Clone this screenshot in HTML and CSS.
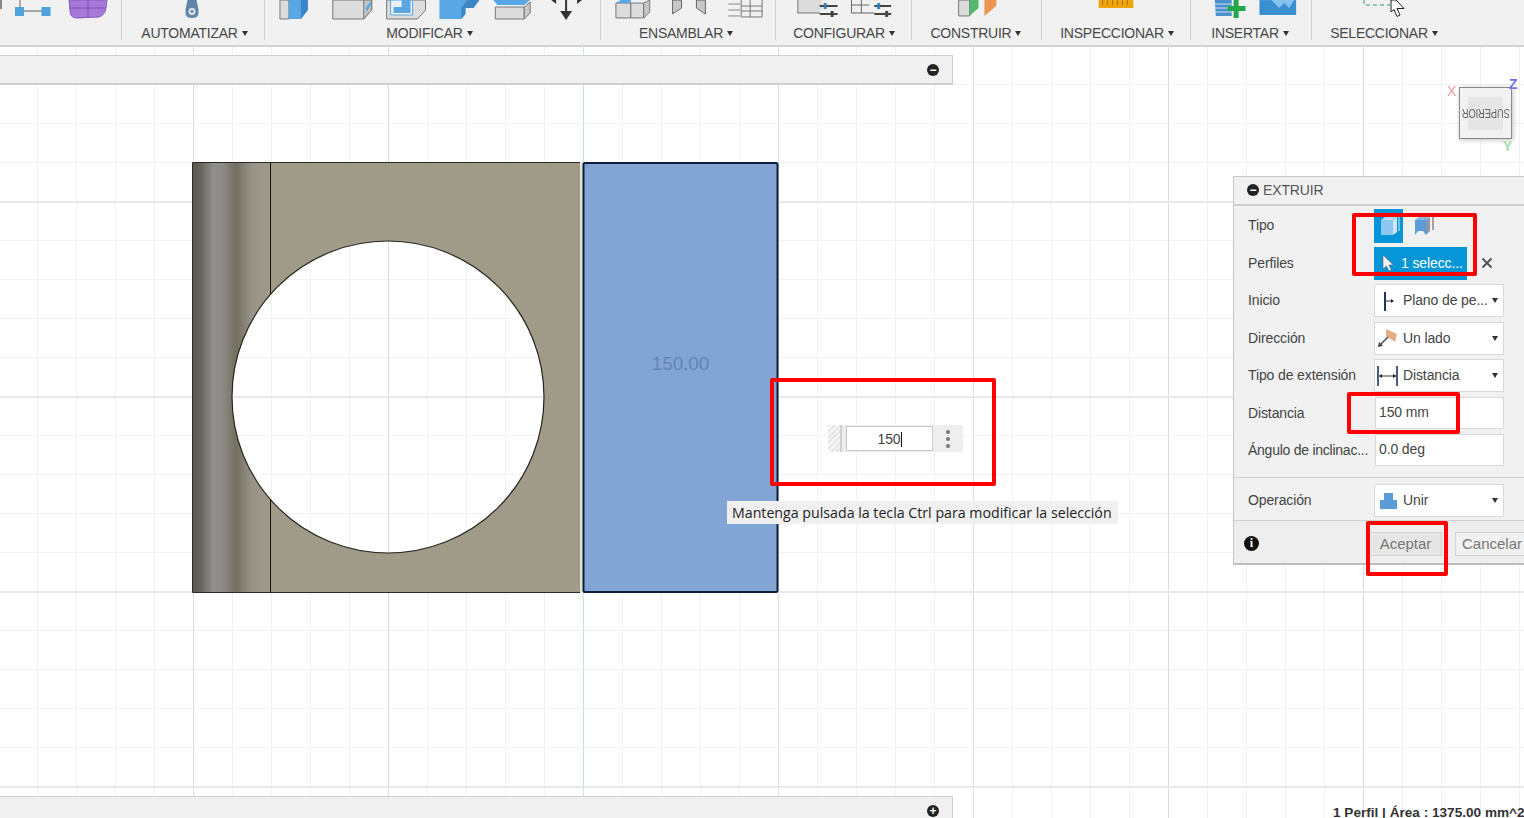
FILE: index.html
```html
<!DOCTYPE html>
<html lang="es">
<head>
<meta charset="utf-8">
<title>Extruir</title>
<link rel="stylesheet" href="styles.css">
</head>
<body>
<div class="app">
  <header class="toolbar">
    <section class="group g-crear">
      <svg class="tools" viewBox="0 0 121 20">
        <path d="M0 0H2V9H0Z" fill="#888"/>
        <path d="M20 0V8" stroke="#666" fill="none"/>
        <path d="M24 11H42" stroke="#777" stroke-width="1.2"/>
        <rect x="15" y="7" width="9" height="9" fill="#4ea3dd"/>
        <rect x="41.500" y="7" width="9" height="9" fill="#4ea3dd"/>
        <path d="M69 0H107L106 8Q105 15 99 17L77 18Q70 18 70 11Z" fill="#a678d8" stroke="#8a5cc0"/>
        <path d="M88 0V18M70 8H105" stroke="#7c4fb5" stroke-width="1" fill="none"/>
      </svg>
    </section>
    <section class="group g-auto">
      <svg class="tools" viewBox="122 0 143 20">
        <path d="M188 0H197L199 9V13Q199 18 192.500 18T186 13V9Z" fill="#5f86a8"/>
        <circle cx="192.500" cy="11.500" r="3.500" fill="#dfe6ec"/>
        <circle cx="192.500" cy="11.500" r="1.500" fill="#5f7f9a"/>
      </svg>
      <div class="label">AUTOMATIZAR<i class="caret"></i></div>
    </section>
    <section class="group g-mod">
      <svg class="tools" viewBox="265 0 336 20">
        <path d="M280 0V19H289V0Z" fill="#dcdcdc" stroke="#777"/>
        <path d="M289 0V19H301L308 10V0Z" fill="#58a6e4"/>
        <path d="M301 0V19L308 10V0Z" fill="#3c86c4"/>
        <path d="M333 0V19H364L372 10V0Z" fill="#dcdcdc" stroke="#777"/>
        <path d="M364 0V19L372 10V0Z" fill="#c4c4c4" stroke="#777"/>
        <path d="M366 8L371 1V5L367 12Z" fill="#58a6e4"/>
        <path d="M387 0V19H418L426 10V0Z" fill="#dcdcdc" stroke="#777"/>
        <path d="M391 15V0H413V15Z" fill="#eef2f5" stroke="#58a6e4"/>
        <path d="M394 13V7H402V0H411V13Z" fill="#58a6e4"/>
        <path d="M440 0V19H462L466 14V8H474L480 0Z" fill="#58a6e4"/>
        <path d="M462 19V8L468 0H480L474 8H466V14Z" fill="#3c86c4"/>
        <path d="M496 7H525V19H496Z" fill="#dcdcdc" stroke="#777"/>
        <path d="M525 7L531 2V13L525 19Z" fill="#c8c8c8" stroke="#777"/>
        <path d="M494 0H531L525 5H498Z" fill="#58a6e4"/>
        <path d="M567 0V17" stroke="#333" stroke-width="2"/>
        <path d="M561 11H573L567 20Z" fill="#333"/>
        <path d="M552 0L557 4V0ZM583 0L578 4V0Z" fill="#333"/>
      </svg>
      <div class="label">MODIFICAR<i class="caret"></i></div>
    </section>
    <section class="group g-ens">
      <svg class="tools" viewBox="601 0 175 20">
        <path d="M616 3H631V18H616Z" fill="#dcdcdc" stroke="#777"/>
        <path d="M631 3H644V18H631Z" fill="#dcdcdc" stroke="#777"/>
        <path d="M644 3L650 0V12L644 18Z" fill="#c8c8c8" stroke="#777"/>
        <path d="M616 3L621 0H631V3Z" fill="#58a6e4"/>
        <path d="M673 0V14L682 8V0Z" fill="#c8c8c8" stroke="#666"/>
        <path d="M706 0V14L697 8V0Z" fill="#c8c8c8" stroke="#666"/>
        <path d="M729 4H741M729 10H741M729 16H741" stroke="#888" fill="none"/>
        <path d="M742 0V17H763V0M742 6H763M742 11H763M751 0V17" stroke="#777" fill="none"/>
      </svg>
      <div class="label">ENSAMBLAR<i class="caret"></i></div>
    </section>
    <section class="group g-conf">
      <svg class="tools" viewBox="776 0 136 20">
        <path d="M798 0H822V10H820V13H798Z" fill="#dcdcdc"/>
        <path d="M798 0V13H820" fill="none" stroke="#777"/>
        <path d="M820 6H838M820 14H838" stroke="#444" stroke-width="2"/>
        <rect x="824" y="3" width="3" height="6" fill="#2f7fc1"/>
        <rect x="831" y="11" width="3" height="6" fill="#444"/>
        <path d="M852 0V13H875M852 5H870M862 0V13" stroke="#666" fill="none"/>
        <path d="M875 6H892M875 14H892" stroke="#444" stroke-width="2"/>
        <rect x="878" y="3" width="3" height="6" fill="#2f7fc1"/>
        <rect x="886" y="11" width="3" height="6" fill="#444"/>
      </svg>
      <div class="label">CONFIGURAR<i class="caret"></i></div>
    </section>
    <section class="group g-cons">
      <svg class="tools" viewBox="912 0 130 20">
        <path d="M959 0V16H970V0Z" fill="#dcdcdc" stroke="#777"/>
        <path d="M970 0V16L979 8V0Z" fill="#55b96d"/>
        <path d="M985 0V16L997 6V0Z" fill="#ee9650"/>
      </svg>
      <div class="label">CONSTRUIR<i class="caret"></i></div>
    </section>
    <section class="group g-insp">
      <svg class="tools" viewBox="1042 0 149 20">
        <rect x="1099" y="0" width="35" height="8" fill="#f1a30a"/>
        <path d="M1103 0V5M1108 0V5M1113 0V5M1118 0V5M1123 0V5M1128 0V5" stroke="#a8730a"/>
      </svg>
      <div class="label">INSPECCIONAR<i class="caret"></i></div>
    </section>
    <section class="group g-ins">
      <svg class="tools" viewBox="1191 0 121 20">
        <path d="M1215 0H1232V16H1216Z" fill="#4b8fce"/>
        <path d="M1215 4H1232M1215 8H1232M1215 12H1232" stroke="#cfe2f2"/>
        <path d="M1234 0H1239V6H1246V11H1239V18H1234V11H1228V6H1234Z" fill="#23a84a"/>
        <rect x="1260" y="0" width="37" height="15" fill="#3a8fd1"/>
        <path d="M1272 0L1280 8L1285 3L1290 8L1295 0Z" fill="#86c3ee"/>
      </svg>
      <div class="label">INSERTAR<i class="caret"></i></div>
    </section>
    <section class="group g-sel">
      <svg class="tools" viewBox="1312 0 146 20">
        <path d="M1364 0V5H1390" stroke="#2ca36a" stroke-dasharray="4 3" fill="none"/>
        <path d="M1391 0V12L1394 9.500L1397 16.500L1400 15L1397 8.500H1404L1396 0Z" fill="#fff" stroke="#222"/>
      </svg>
      <div class="label">SELECCIONAR<i class="caret"></i></div>
    </section>
  </header>

  <main class="viewport">
    <svg class="scene" viewBox="0 47 1524 771" aria-label="Vista">
      <defs>
        <pattern id="minor" width="39" height="39" patternUnits="userSpaceOnUse" x="37" y="45">
          <rect width="1" height="39" fill="#f2f2f2"/>
          <rect width="39" height="1" fill="#f2f2f2"/>
        </pattern>
        <pattern id="major" width="195" height="195" patternUnits="userSpaceOnUse" x="193" y="6">
          <rect width="1" height="195" fill="#dcdcdc"/>
          <rect width="195" height="2" fill="#e8e8e8"/>
        </pattern>
        <linearGradient id="fillet" x1="0" x2="1" y1="0" y2="0">
          <stop offset="0" stop-color="#5a554e"/>
          <stop offset="0.1" stop-color="#68635b"/>
          <stop offset="0.26" stop-color="#8f8f8c"/>
          <stop offset="0.38" stop-color="#8d8b85"/>
          <stop offset="0.56" stop-color="#736e60"/>
          <stop offset="0.76" stop-color="#979388"/>
          <stop offset="1" stop-color="#a09a88"/>
        </linearGradient>
        <clipPath id="hole">
          <path clip-rule="evenodd" d="M193 162H581V593H193ZM232 397a156 156 0 1 0 312 0a156 156 0 1 0 -312 0Z"/>
        </clipPath>
      </defs>
      <rect x="0" y="47" width="1524" height="771" fill="#fff"/>
      <rect x="0" y="47" width="1524" height="771" fill="url(#minor)"/>
      <rect x="0" y="47" width="1524" height="771" fill="url(#major)"/>
      <rect x="583" y="47" width="1" height="771" fill="#bfeec8"/>
      <g clip-path="url(#hole)">
        <rect class="body" x="270" y="162" width="310" height="431"/>
        <rect x="193" y="162" width="77" height="431" fill="url(#fillet)"/>
      </g>
      <rect x="580" y="162" width="3" height="431" fill="#e6e3d8"/>
      <path d="M580 162.500H192.500V592.500H580" fill="none" stroke="#2b2a26"/>
      <path d="M270.500 162.500V295M270.500 499V592.500" stroke="#111" fill="none"/>
      <circle cx="388" cy="397" r="156" fill="none" stroke="#26251f" stroke-width="1.200"/>
      <rect x="583.500" y="163" width="194" height="429" rx="1.500" fill="#82a5d6" stroke="#0e1e38" stroke-width="2"/>
      <text class="dim" x="680.500" y="370" text-anchor="middle">150.00</text>
    </svg>

    <div class="strip strip-top"><span class="round">−</span></div>
    <div class="strip strip-bottom"><span class="round">+</span></div>

    <div class="cube">
      <span class="axis axis-x">X</span>
      <span class="axis axis-z">Z</span>
      <span class="axis axis-y">Y</span>
      <div class="cube-face"><span class="cube-text">SUPERIOR</span></div>
    </div>

    <div class="float-input">
      <span class="grip"></span>
      <span class="float-field">150<i class="text-cursor"></i></span>
      <span class="kebab"><i></i><i></i><i></i></span>
    </div>

    <div class="tip">Mantenga pulsada la tecla Ctrl para modificar la selección</div>

    <aside class="dialog">
      <div class="dialog-head"><span class="round round-sm">−</span>EXTRUIR</div>
      <div class="dialog-body">
        <div class="row">
          <span class="row-label">Tipo</span>
          <div class="type-btns">
            <span class="type-btn active">
              <svg width="22" height="22" viewBox="0 0 22 22"><path d="M3 5H15V20H3Z" fill="#8ec8f2"/><path d="M15 5L19 2V17L15 20Z" fill="#cfe6f7"/><path d="M3 5L7 2H19L15 5Z" fill="#b9dcf5"/><path d="M21 2V16" stroke="#d8eefa"/></svg>
            </span>
            <span class="type-btn">
              <svg width="22" height="22" viewBox="0 0 22 22"><path d="M3 5H14V20L11 16H6L3 20Z" fill="#5c9bd8"/><path d="M14 5L18 2V16L14 20Z" fill="#8a99a8"/><path d="M3 5L7 2H18L14 5Z" fill="#86b8e6"/><path d="M21 1V15" stroke="#555"/></svg>
            </span>
          </div>
        </div>
        <div class="row">
          <span class="row-label">Perfiles</span>
          <div class="profile-line">
            <span class="profile-btn">
              <svg width="12" height="18" viewBox="0 0 12 18"><path d="M1 1V15L4.500 12L7 17L9.500 16L7 11H11.500Z" fill="#f2f2f2" stroke="#556" stroke-width=".6"/></svg>
              1 selecc...
            </span>
            <svg class="clear" width="12" height="12" viewBox="0 0 12 12"><path d="M1.500 1.500L10.500 10.500M10.500 1.500L1.500 10.500" stroke="#555" stroke-width="2"/></svg>
          </div>
        </div>
        <div class="row">
          <span class="row-label">Inicio</span>
          <div class="select">
            <svg class="sel-icon" width="22" height="22" viewBox="0 0 22 22"><path d="M8 2V21" stroke="#1d3560" stroke-width="2"/><path d="M9 11H15" stroke="#333"/><path d="M14 9L17 11L14 13Z" fill="#222"/></svg>
            <span class="sel-text">Plano de pe...</span><i class="caret sel-caret"></i>
          </div>
        </div>
        <div class="row">
          <span class="row-label">Dirección</span>
          <div class="select">
            <svg class="sel-icon" width="22" height="22" viewBox="0 0 22 22"><path d="M9 2L20 7L18 15L9 9Z" fill="#e6ae84"/><path d="M2 19L11 10" stroke="#444" stroke-width="1.500"/><path d="M1 20L2 15L6 19Z" fill="#444"/></svg>
            <span class="sel-text">Un lado</span><i class="caret sel-caret"></i>
          </div>
        </div>
        <div class="row">
          <span class="row-label">Tipo de extensión</span>
          <div class="select">
            <svg class="sel-icon" width="22" height="22" viewBox="0 0 22 22"><path d="M1 1V21M20 1V21" stroke="#1d3560" stroke-width="1.600"/><path d="M2 11H19" stroke="#333"/><path d="M5 9L2 11L5 13ZM16 9L19 11L16 13Z" fill="#222"/></svg>
            <span class="sel-text">Distancia</span><i class="caret sel-caret"></i>
          </div>
        </div>
        <div class="row">
          <span class="row-label">Distancia</span>
          <div class="field">150 mm</div>
        </div>
        <div class="row">
          <span class="row-label tight">Ángulo de inclinac...</span>
          <div class="field">0.0 deg</div>
        </div>
        <div class="row row-op">
          <span class="row-label">Operación</span>
          <div class="select">
            <svg class="sel-icon" width="22" height="22" viewBox="0 0 22 22"><path d="M7 3H16V10H20V19H3V10H7Z" fill="#5b9bd8"/></svg>
            <span class="sel-text">Unir</span><i class="caret sel-caret"></i>
          </div>
        </div>
      </div>
      <div class="dialog-foot">
        <span class="info">i</span>
        <button class="btn btn-ok" type="button">Aceptar</button>
        <button class="btn btn-cancel" type="button">Cancelar</button>
      </div>
    </aside>

    <div class="mark mark-value"></div>
    <div class="mark mark-type"></div>
    <div class="mark mark-dist"></div>
    <div class="mark mark-ok"></div>

    <div class="status">1 Perfil | Área : 1375.00 mm^2</div>
  </main>
</div>
</body>
</html>
```

FILE: styles.css
```css
* { box-sizing: border-box; }
html, body { margin: 0; padding: 0; height: 100%; overflow: hidden; }
body { font-family: "Liberation Sans", Arial, sans-serif; font-size: 14px; letter-spacing: -.12px; color: #444; background: #fff; }
.app { width: 1524px; height: 818px; display: flex; flex-direction: column; overflow: hidden; }

/* toolbar */
.toolbar { height: 47px; flex: none; display: flex; background: #f1f1f1; border-bottom: 2px solid #d2d2d2; }
.group { height: 40px; display: flex; flex-direction: column; align-items: center; border-right: 1px solid #cfcfcf; flex: none; }
.g-crear { width: 122px; }
.g-auto { width: 143px; }
.g-mod { width: 336px; }
.g-ens { width: 175px; }
.g-conf { width: 136px; }
.g-cons { width: 130px; }
.g-insp { width: 149px; }
.g-ins { width: 121px; }
.g-sel { width: 146px; border-right: 0; }
.tools { display: block; width: 100%; height: 20px; flex: none; }
.label { margin-top: 5px; line-height: 16px; letter-spacing: -.25px; white-space: nowrap; color: #474747; display: flex; align-items: center; }
.g-auto .label { margin-left: 3px; }
.g-mod .label { margin-right: 6px; }
.g-ens .label { margin-right: 4px; }
.g-conf .label { margin-left: 1px; }
.g-cons .label { margin-right: 1px; }
.g-insp .label { margin-left: 2px; }
.g-ins .label { margin-right: 2px; }
.g-sel .label { margin-right: 2px; }
.caret { display: inline-block; width: 0; height: 0; margin-left: 4px; border-left: 3.500px solid transparent; border-right: 3.500px solid transparent; border-top: 5px solid #333; }

/* viewport */
.viewport { position: relative; flex: 1; min-height: 0; }
.scene { display: block; width: 1524px; height: 771px; }
.body { fill: #a09a88; }
.dim { font-size: 19px; fill: #6585b0; }

.strip { position: absolute; left: 0; width: 953px; background: #f0f0f0; border: 1px solid #cfcfcf; border-left: 0; display: flex; justify-content: flex-end; align-items: center; padding-right: 13px; }
.strip-top { top: 8px; height: 30px; border-bottom: 2px solid #d0d0d0; }
.strip-bottom { top: 749px; height: 30px; align-items: flex-start; padding-top: 8px; }
.round { width: 12px; height: 12px; border-radius: 50%; background: #222; color: #fff; font-size: 12px; font-weight: bold; line-height: 12px; letter-spacing: 0; text-align: center; display: block; }
.round-sm { margin-right: 4px; flex: none; }

/* view cube */
.cube { position: absolute; left: 1459px; top: 40px; width: 53px; height: 52px; }
.cube-face { width: 53px; height: 52px; border: 1px solid #8a8a8a; background: linear-gradient(#e6e6e6, #e6e6e6) center / 35px 33px no-repeat #f2f2f2; box-shadow: 1px 1px 5px rgba(0,0,0,.25); display: flex; align-items: center; justify-content: center; }
.cube-text { font-size: 12px; color: #666; white-space: nowrap; transform: rotate(180deg) scaleX(.78); filter: blur(.5px); }
.axis { position: absolute; font-size: 14px; line-height: 14px; filter: blur(.5px); }
.axis-x { left: -12px; top: -3px; color: #f09a9a; }
.axis-z { left: 50px; top: -10px; color: #7070e0; font-weight: bold; }
.axis-y { left: 44px; top: 52px; color: #9fe3a8; font-weight: bold; }

/* floating number input */
.float-input { position: absolute; left: 828px; top: 378px; width: 135px; height: 27px; background: #eeeeee; display: flex; align-items: center; }
.grip { width: 14px; height: 27px; border-right: 2px solid #d0d0d0; background: repeating-linear-gradient(135deg, #e6e6e6 0 2px, #f6f6f6 2px 4px); }
.float-field { margin-left: 4px; width: 87px; height: 25px; background: #fff; border: 1px solid #c8c8c8; text-align: center; line-height: 24px; font-size: 14px; color: #444; }
.text-cursor { display: inline-block; width: 1px; height: 15px; background: #111; vertical-align: -3px; }
.kebab { flex: 1; display: flex; flex-direction: column; align-items: center; gap: 3px; }
.kebab i { width: 4px; height: 4px; border-radius: 50%; background: #777; }

.tip { position: absolute; left: 727px; top: 454px; width: 391px; height: 23px; background: #f0f0f0; font-family: "Open Sans", sans-serif; font-size: 14.200px; letter-spacing: 0; line-height: 23px; padding-left: 5px; color: #222; white-space: nowrap; }

/* dialog */
.dialog { position: absolute; left: 1233px; top: 129px; width: 310px; height: 389px; background: #f1f1f1; border: 1px solid #c6c6c6; border-bottom: 2px solid #bdbdbd; display: flex; flex-direction: column; }
.dialog-head { height: 29px; flex: none; display: flex; align-items: center; padding: 0 0 2px 13px; border-bottom: 2px solid #cfcfcf; color: #555; }
.dialog-body { flex: none; padding: 3px 0 0 14px; height: 315px; display: flex; flex-direction: column; border-bottom: 1px solid #d0d0d0; position: relative; }
.row { height: 37.500px; flex: none; display: grid; grid-template-columns: 126px 130px; align-items: start; }
.row-label { line-height: 32px; white-space: nowrap; color: #444; }
.tight { letter-spacing: -.25px; }
.row:first-child .row-label { line-height: 33px; }
.row-op { margin-top: 12.500px; position: relative; }
.row-op::before { content: ""; position: absolute; left: -14px; width: 310px; margin-top: -7px; border-top: 1px solid #d0d0d0; }

.type-btns { display: flex; gap: 5px; }
.type-btn { width: 29px; height: 34px; display: flex; align-items: center; justify-content: center; }
.type-btn.active { background: #0696d7; }
.profile-line { display: flex; align-items: center; height: 33px; }
.profile-btn { width: 93px; height: 33px; background: #0696d7; color: #fff; display: flex; align-items: center; gap: 7px; padding-left: 8px; white-space: nowrap; }
.clear { margin-left: 14px; }
.select { width: 130px; height: 33px; background: #fff; border: 1px solid #d8d8d8; display: flex; align-items: center; padding-left: 2px; }
.sel-icon { flex: none; }
.sel-text { margin: 0 0 1px 4px; white-space: nowrap; }
.sel-caret { margin-left: auto; margin-right: 5px; }
.field { width: 129px; height: 32px; background: #fff; border: 1px solid #d8d8d8; line-height: 29px; padding-left: 3px; margin-left: 1px; }

.dialog-foot { flex: 1; display: flex; align-items: center; background: #eeeeee; padding: 3px 0 0 10px; }
.info { width: 15px; height: 15px; border-radius: 50%; background: #111; color: #fff; font-family: "Liberation Serif", serif; font-weight: bold; font-size: 12px; letter-spacing: 0; line-height: 15px; text-align: center; flex: none; }
.btn { font: inherit; font-size: 15px; letter-spacing: 0; color: #777; height: 24px; border: 1px solid #d4d4d4; background: #e6e6e6; padding: 0; flex: none; }
.btn-ok { width: 73px; margin-left: 110px; }
.btn-cancel { width: 80px; margin-left: 13px; padding-right: 6px; background: #f1f1f1; }

/* annotation marks */
.mark { position: absolute; border: 4px solid #f00; border-radius: 2px; }
.mark-value { left: 770px; top: 331px; width: 226px; height: 108px; }
.mark-type { left: 1352px; top: 166px; width: 125px; height: 63px; }
.mark-dist { left: 1347px; top: 345px; width: 113px; height: 42px; }
.mark-ok { left: 1366px; top: 474px; width: 82px; height: 55px; }

.status { position: absolute; left: 1333px; top: 758px; font-size: 13.600px; letter-spacing: 0; font-weight: bold; line-height: 16px; color: #333; white-space: nowrap; }
```
